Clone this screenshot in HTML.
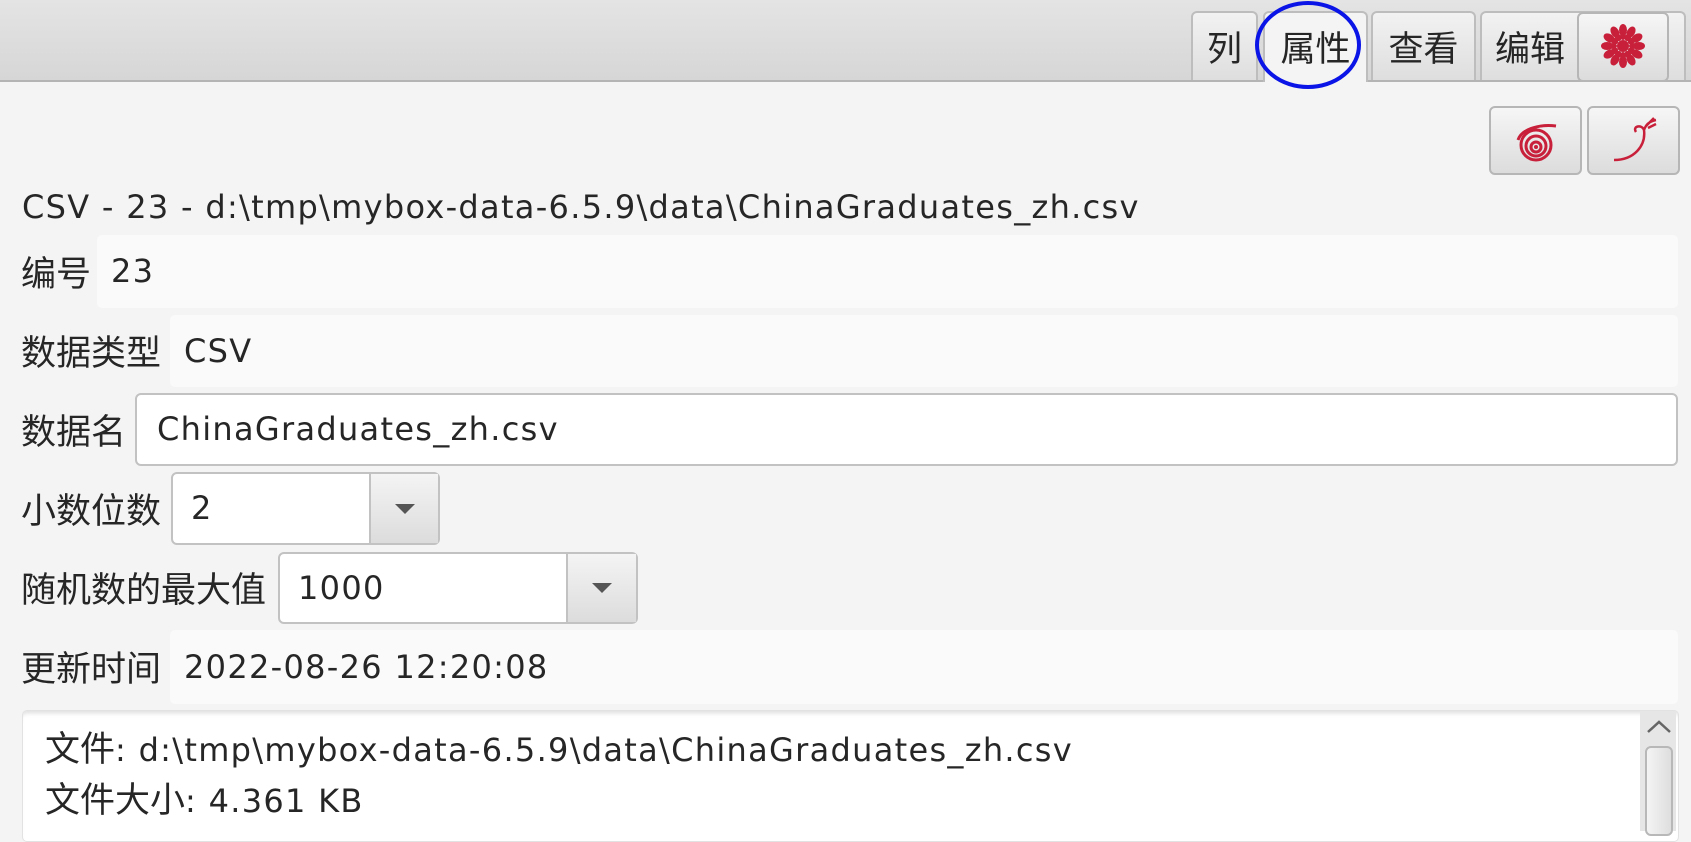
<!DOCTYPE html>
<html><head><meta charset="utf-8"><style>
body{margin:0;width:1691px;height:826px;background:#f4f4f4;position:relative;overflow:hidden;font-family:"DejaVu Sans","Noto Sans CJK SC",sans-serif;color:#262626;font-size:32px;letter-spacing:1.3px;}
.c{font-family:"Noto Sans CJK SC",sans-serif;font-size:35px;letter-spacing:0;}
.a{position:absolute;}
.tabbar{left:0;top:0;width:1691px;height:80px;background:linear-gradient(#e4e4e4,#d6d6d6);border-bottom:2px solid #b4b4b4;}
.tab{position:absolute;top:11px;height:69px;border:2px solid #bdbdbd;border-bottom:none;border-radius:6px 6px 0 0;background:linear-gradient(#f2f2f2,#dedede);font-family:"Noto Sans CJK SC",sans-serif;font-size:35px;letter-spacing:0;text-align:center;line-height:68px;box-sizing:border-box;}
.btn{position:absolute;border:2px solid #b6b6b6;border-radius:6px;background:linear-gradient(#f6f6f6,#dcdcdc);box-sizing:border-box;}
.lbl{position:absolute;left:21px;font-family:"Noto Sans CJK SC",sans-serif;font-size:35px;letter-spacing:0;}
.fld{position:absolute;background:#fafafa;border-radius:5px;box-sizing:border-box;padding-left:14px;}
.combo{position:absolute;background:#fff;border:2px solid #c2c2c2;border-radius:6px;box-sizing:border-box;padding-left:18px;}
.arr{position:absolute;top:0;right:0;bottom:0;border-left:2px solid #c2c2c2;background:linear-gradient(#f4f4f4,#dcdcdc);}
.arr:after{content:"";position:absolute;left:50%;top:50%;margin:-5px 0 0 -10px;border-left:10px solid transparent;border-right:10px solid transparent;border-top:10px solid #555;}
</style></head><body>
<div class="a tabbar"></div>
<div class="tab" style="left:1191px;width:67px">列</div>
<div class="tab" style="left:1263px;width:105px;background:#f4f4f4;height:71px">属性</div>
<div class="tab" style="left:1371px;width:105px">查看</div>
<div class="tab" style="left:1480px;width:206px;text-align:left;padding-left:13px">编辑</div>
<div class="btn" style="left:1577px;top:12px;width:92px;height:70px"></div>
<svg class="a" style="left:1598px;top:22px" width="50" height="48" viewBox="0 0 50 48"><g fill="#c8203a">
<circle cx="25" cy="24" r="6"/>
<g id="p"><ellipse cx="25" cy="8" rx="4" ry="6"/><ellipse cx="25" cy="14" rx="3" ry="4"/></g>
<use href="#p" transform="rotate(30 25 24)"/><use href="#p" transform="rotate(60 25 24)"/><use href="#p" transform="rotate(90 25 24)"/><use href="#p" transform="rotate(120 25 24)"/><use href="#p" transform="rotate(150 25 24)"/><use href="#p" transform="rotate(180 25 24)"/><use href="#p" transform="rotate(210 25 24)"/><use href="#p" transform="rotate(240 25 24)"/><use href="#p" transform="rotate(270 25 24)"/><use href="#p" transform="rotate(300 25 24)"/><use href="#p" transform="rotate(330 25 24)"/></g></svg>
<svg class="a" style="left:1252px;top:0" width="112" height="92"><ellipse cx="56" cy="45" rx="51" ry="42" fill="none" stroke="#0a14e6" stroke-width="4"/></svg>

<div class="btn" style="left:1489px;top:106px;width:93px;height:69px"></div>
<svg class="a" style="left:1514px;top:122px" width="46" height="40" viewBox="0 0 46 40"><g fill="none" stroke="#c8203a" stroke-width="3"><path d="M42 4 C28 2 8 6 4 18"/><circle cx="22" cy="23" r="15"/><circle cx="22" cy="24" r="10"/><circle cx="22" cy="25" r="5"/></g><circle cx="22" cy="25" r="2" fill="#c8203a"/></svg>
<div class="btn" style="left:1587px;top:106px;width:93px;height:69px"></div>
<svg class="a" style="left:1610px;top:116px" width="50" height="50" viewBox="0 0 50 50"><path d="M4 44 C24 44 36 30 34 14 C32 8 22 10 26 16 M34 14 C36 8 40 5 46 4 M36 10 L44 2 M38 12 L46 8" fill="none" stroke="#c8203a" stroke-width="2.5"/></svg>

<div class="a" style="left:22px;top:182px;height:50px;line-height:50px">CSV - 23 - d:\tmp\mybox-data-6.5.9\data\ChinaGraduates_zh.csv</div>

<div class="lbl" style="top:235px;height:73px;line-height:73px">编号</div>
<div class="fld" style="left:97px;top:235px;width:1581px;height:73px;line-height:73px">23</div>
<div class="lbl" style="top:315px;height:72px;line-height:72px">数据类型</div>
<div class="fld" style="left:170px;top:315px;width:1508px;height:72px;line-height:72px">CSV</div>
<div class="lbl" style="top:393px;height:73px;line-height:73px">数据名</div>
<div class="combo" style="left:135px;top:393px;width:1543px;height:73px;line-height:69px;padding-left:20px">ChinaGraduates_zh.csv</div>
<div class="lbl" style="top:472px;height:73px;line-height:73px">小数位数</div>
<div class="combo" style="left:171px;top:472px;width:269px;height:73px;line-height:69px">2<div class="arr" style="width:67px"></div></div>
<div class="lbl" style="top:552px;height:72px;line-height:72px">随机数的最大值</div>
<div class="combo" style="left:278px;top:552px;width:360px;height:72px;line-height:68px">1000<div class="arr" style="width:68px"></div></div>
<div class="lbl" style="top:630px;height:74px;line-height:74px">更新时间</div>
<div class="fld" style="left:170px;top:630px;width:1508px;height:74px;line-height:74px">2022-08-26 12:20:08</div>

<div class="a" style="left:22px;top:710px;width:1655px;height:130px;background:#fff;border:1px solid #e2e2e2;border-radius:5px;box-shadow:inset 0 5px 5px -3px #ddd"></div>
<div class="a" style="left:1640px;top:711px;width:36px;height:120px;background:#e6e6e6"></div>
<svg class="a" style="left:1645px;top:717px" width="28" height="20"><path d="M3 15 L14 5 L25 15" fill="none" stroke="#666" stroke-width="2.5"/></svg>
<div class="a" style="left:1645px;top:746px;width:28px;height:90px;border:2px solid #b8b8b8;border-radius:6px;box-sizing:border-box;background:linear-gradient(90deg,#f4f4f4,#dedede)"></div>
<div class="a" style="left:45px;top:722px;height:50px;line-height:50px"><span class="c">文件</span>: d:\tmp\mybox-data-6.5.9\data\ChinaGraduates_zh.csv</div>
<div class="a" style="left:45px;top:773px;height:50px;line-height:50px"><span class="c">文件大小</span>: 4.361 KB</div>
</body></html>
